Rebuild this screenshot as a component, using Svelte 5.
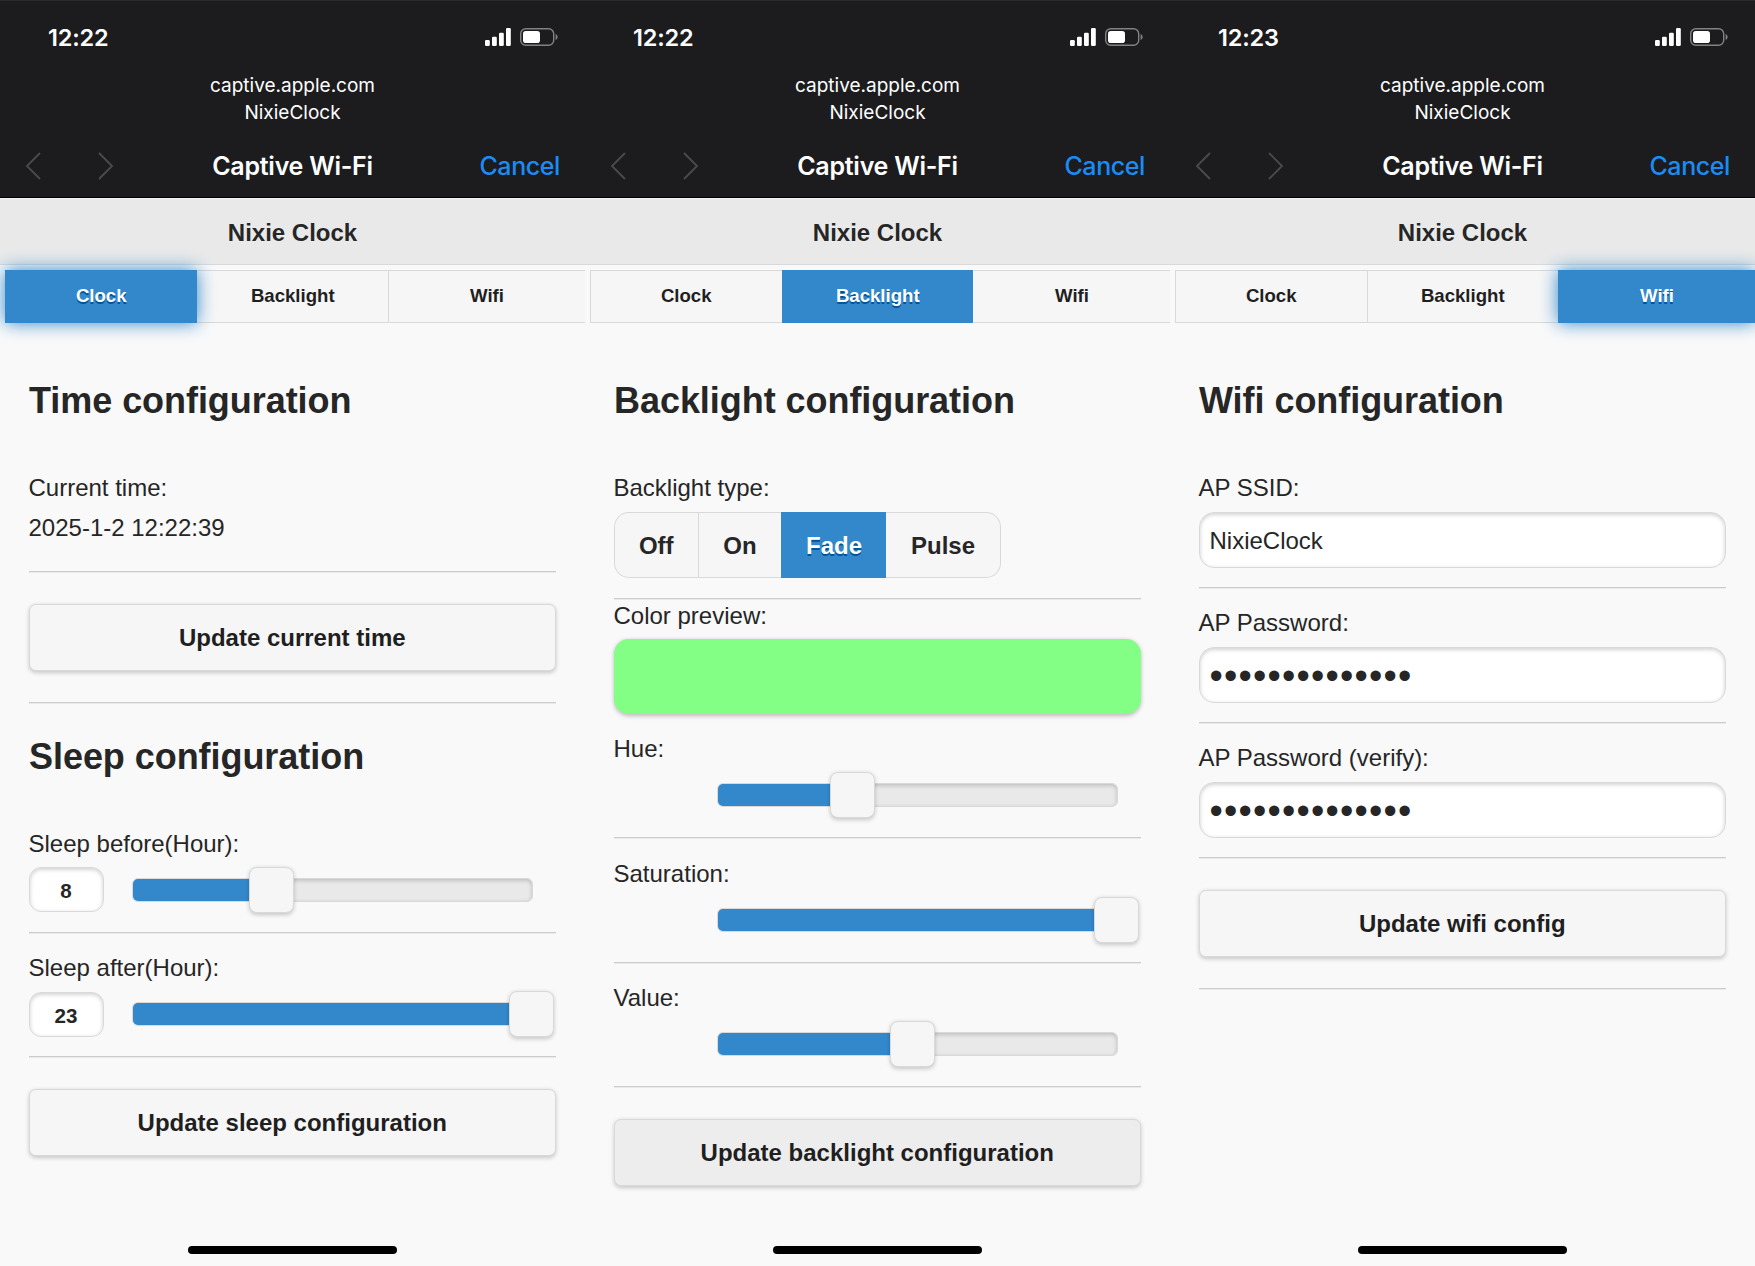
<script>
  const tabs = ['Clock', 'Backlight', 'Wifi'];
  const modes = ['Off', 'On', 'Fade', 'Pulse'];
  const mask = '•'.repeat(14);
</script>

{#snippet chrome(time, active, focused)}
  <header class="browser">
    <div class="status">
      <span class="time">{time}</span>
      <svg class="signal" viewBox="0 0 26 18" width="26" height="18">
        <rect x="0" y="12" width="4.8" height="6" rx="1.3" />
        <rect x="7" y="8.8" width="4.8" height="9.2" rx="1.3" />
        <rect x="14" y="4.8" width="4.8" height="13.2" rx="1.3" />
        <rect x="21" y="0" width="4.8" height="18" rx="1.3" />
      </svg>
      <svg class="battery" viewBox="0 0 38 18" width="38" height="18">
        <rect class="shell" x="0.7" y="0.7" width="33" height="16.6" rx="5" />
        <path class="nub" d="M35.6 6v6c1.2-.5 2-1.7 2-3s-.8-2.500-2-3z" />
        <rect x="3" y="3" width="17" height="12" rx="2.800" />
      </svg>
    </div>
    <div class="origin">
      <span class="host">captive.apple.com</span>
      <span class="network">NixieClock</span>
    </div>
    <div class="toolbar">
      <div class="arrows">
        <svg viewBox="0 0 16 28" width="16" height="28"><path d="M15 1 2 14l13 13" /></svg>
        <svg viewBox="0 0 16 28" width="16" height="28"><path d="m1 1 13 13L1 27" /></svg>
      </div>
      <span class="title">Captive Wi-Fi</span>
      <span class="cancel">Cancel</span>
    </div>
  </header>
  <h1>Nixie Clock</h1>
  <nav>
    {#each tabs as tab}
      <span class="tab" class:active={tab === active} class:focused={tab === active && focused}>{tab}</span>
    {/each}
  </nav>
{/snippet}

{#snippet slider(label, percent, value)}
  <div class="field">
    <div class="label">{label}</div>
    <div class="slider">
      {#if value}
        <span class="number">{value}</span>
      {:else}
        <span></span>
      {/if}
      <div class="track">
        <div class="fill" style:width="{percent}%"></div>
        <div class="handle" style:left="{percent}%"></div>
      </div>
    </div>
  </div>
  <hr />
{/snippet}

{#snippet textField(label, value, masked)}
  <div class="entry">
    <div class="label">{label}</div>
    <div class="input" class:masked>{value}</div>
  </div>
  <hr />
{/snippet}

<main>
  <section class="phone">
    {@render chrome('12:22', 'Clock', true)}
    <div class="content">
      <h2>Time configuration</h2>
      <div class="label first">Current time:</div>
      <div class="label value">2025-1-2 12:22:39</div>
      <hr class="after-value" />
      <button>Update current time</button>
      <hr class="after-button" />
      <h2 class="second">Sleep configuration</h2>
      <div class="sliders sleep">
        {@render slider('Sleep before(Hour):', 34.78, '8')}
        {@render slider('Sleep after(Hour):', 100, '23')}
      </div>
      <button>Update sleep configuration</button>
    </div>
    <div class="home"></div>
  </section>

  <section class="phone">
    {@render chrome('12:22', 'Backlight', false)}
    <div class="content">
      <h2>Backlight configuration</h2>
      <div class="label first">Backlight type:</div>
      <div class="segments">
        {#each modes as mode}
          <span class="segment" class:active={mode === 'Fade'}>{mode}</span>
        {/each}
      </div>
      <hr class="after-segments" />
      <div class="label preview-label">Color preview:</div>
      <div class="preview"></div>
      <div class="sliders">
        {@render slider('Hue:', 33.9, '')}
        {@render slider('Saturation:', 100, '')}
        {@render slider('Value:', 48.8, '')}
      </div>
      <button class="pressed">Update backlight configuration</button>
    </div>
    <div class="home"></div>
  </section>

  <section class="phone">
    {@render chrome('12:23', 'Wifi', true)}
    <div class="content">
      <h2>Wifi configuration</h2>
      <div class="entries">
        {@render textField('AP SSID:', 'NixieClock', false)}
        {@render textField('AP Password:', mask, true)}
        {@render textField('AP Password (verify):', mask, true)}
      </div>
      <button>Update wifi config</button>
      <hr class="after-button" />
    </div>
    <div class="home"></div>
  </section>
</main>

<style>
  :global(body) {
    margin: 0;
    background: #f9f9f9;
  }
  main {
    display: grid;
    grid-template-columns: repeat(3, 585px);
    width: 1755px;
    height: 1266px;
    overflow: hidden;
    font-family: 'Liberation Sans', Arial, sans-serif;
    color: #262626;
    background: #f9f9f9;
  }
  .phone {
    display: flex;
    flex-direction: column;
    height: 1266px;
    overflow: hidden;
    box-sizing: border-box;
  }

  .browser {
    flex: none;
    height: 198px;
    box-sizing: border-box;
    background: #1c1c1e;
    border-top: 1px solid #2a2a2c;
    border-bottom: 1px solid #000;
    font-family: Inter, sans-serif;
    color: #fff;
  }
  .status {
    display: flex;
    align-items: center;
    height: 71px;
    padding: 0 27px 0 48px;
  }
  .time {
    flex: 1;
    padding-top: 2px;
    font-size: 23.5px;
    font-weight: 600;
    letter-spacing: -0.2px;
    line-height: 72px;
  }
  .status svg {
    fill: #fff;
    margin-top: 1px;
  }
  .signal {
    margin-right: 9px;
  }
  .battery .shell {
    fill: none;
    stroke: #828284;
    stroke-width: 1.4;
  }
  .battery .nub {
    fill: #828284;
  }
  .origin {
    display: flex;
    flex-direction: column;
    align-items: center;
    font-size: 19px;
    line-height: 27px;
    height: 54px;
  }
  .toolbar {
    display: grid;
    grid-template-columns: 1fr auto 1fr;
    align-items: center;
    margin-top: 8px;
    height: 63px;
    padding: 0 25px;
    font-size: 25px;
    letter-spacing: -0.25px;
  }
  .arrows {
    display: flex;
    gap: 57px;
  }
  .arrows path {
    fill: none;
    stroke: #4a4a4d;
    stroke-width: 1.9;
  }
  .title {
    font-weight: 600;
  }
  .cancel {
    justify-self: end;
    font-weight: 500;
    letter-spacing: -0.4px;
    color: #1a8cf5;
  }

  h1 {
    flex: none;
    margin: 0;
    height: 67px;
    box-sizing: border-box;
    border-top: 1px solid #f2f2f2;
    border-bottom: 1px solid #d9d9d9;
    background: #e9e9e9;
    text-align: center;
    font-size: 24px;
    line-height: 68px;
    text-shadow: 0 1px 0 #eee;
  }
  nav {
    flex: none;
    display: grid;
    grid-template-columns: 191.5px 191.5px 197px;
    margin: 5px 0 0 5px;
    height: 53px;
  }
  .tab {
    box-sizing: border-box;
    border: 1px solid #d9d9d9;
    border-right: 0;
    background: #f6f6f6;
    text-align: center;
    font-size: 18.6px;
    font-weight: bold;
    line-height: 50px;
    color: #1f1f1f;
  }
  .active,
  .active + .tab {
    border-left-color: transparent;
  }
  .tab.active {
    background: #38c;
    border-color: #38c;
    color: #fff;
    text-shadow: 0 1.5px 0 #059;
  }
  .tab.focused {
    z-index: 1;
    box-shadow: 0 0 18px #38c;
  }

  .content {
    flex: 1;
    padding: 0 29px 0 28.5px;
  }
  h2 {
    margin: 56px 0 0 0.5px;
    font-size: 36px;
    line-height: 44px;
    letter-spacing: -0.05px;
  }
  h2.second {
    margin-top: 32px;
  }
  .label {
    display: block;
    font-size: 24px;
    line-height: 30px;
    height: 30px;
  }
  .label.first {
    margin-top: 50px;
  }
  .label.value {
    margin-top: 10px;
  }
  hr {
    margin: 19px 0 0;
    border: 0;
    height: 1px;
    background: #ccc;
    box-shadow: 0 1px 0 #eaeaea;
  }
  hr.after-value {
    margin-top: 28px;
  }
  hr.after-button {
    margin-top: 31px;
  }
  hr.after-segments {
    margin-top: 20px;
  }
  button {
    display: block;
    width: 100%;
    height: 67px;
    margin: 31.5px 0 0;
    padding: 1px 0 0;
    border: 1px solid #d9d9d9;
    border-radius: 7px;
    background: #f6f6f6;
    box-shadow: 0 1.5px 4.5px rgba(0, 0, 0, 0.2);
    font: bold 24px 'Liberation Sans', Arial, sans-serif;
    color: #1f1f1f;
  }
  button.pressed {
    background: #ededed;
  }

  .sliders {
    margin-top: 20px;
  }
  .sliders.sleep {
    margin-top: 50px;
  }
  .field {
    padding-top: 20.5px;
  }
  .field:first-child {
    padding-top: 0;
  }
  .slider {
    display: grid;
    grid-template-columns: 75px 401px;
    column-gap: 28px;
    align-items: center;
    height: 46px;
    margin-top: 8px;
  }
  .number {
    height: 45px;
    box-sizing: border-box;
    border: 1px solid #d9d9d9;
    border-radius: 12px;
    background: #fff;
    box-shadow: inset 0 1.5px 4.5px rgba(0, 0, 0, 0.2);
    text-align: center;
    font-size: 20.6px;
    font-weight: bold;
    line-height: 45px;
  }
  .track {
    position: relative;
    height: 24px;
    box-sizing: border-box;
    border: 1px solid #d9d9d9;
    border-radius: 6px;
    background: #e9e9e9;
    box-shadow: inset 0 1.5px 4.5px rgba(0, 0, 0, 0.2);
  }
  .fill {
    height: 22px;
    border-radius: 5px 0 0 5px;
    background: #38c;
  }
  .handle {
    position: absolute;
    top: -12px;
    width: 45px;
    height: 46px;
    margin-left: -22.5px;
    box-sizing: border-box;
    border: 1px solid #d9d9d9;
    border-radius: 8px;
    background: #f6f6f6;
    box-shadow: 0 1.5px 4.5px rgba(0, 0, 0, 0.2);
  }

  .segments {
    display: grid;
    grid-template-columns: 84.5px 83px 105px 115px;
    grid-template-rows: 66px;
    width: 387.5px;
    height: 66px;
    margin-top: 9px;
  }
  .segment {
    box-sizing: border-box;
    border: 1px solid #d9d9d9;
    border-right: 0;
    background: #f6f6f6;
    text-align: center;
    font-size: 24px;
    font-weight: bold;
    line-height: 66px;
  }
  .segment:first-child {
    border-radius: 15px 0 0 15px;
  }
  .segment:last-child {
    border-right: 1px solid #d9d9d9;
    border-left: 0;
    border-radius: 0 15px 15px 0;
  }
  .segment.active {
    background: #38c;
    border-color: #38c;
    color: #fff;
    text-shadow: 0 1.5px 0 #059;
  }
  .preview-label {
    margin-top: 1.5px;
  }
  .preview {
    height: 75px;
    margin-top: 8.5px;
    border-radius: 15px;
    background: #82ff84;
    box-shadow: 0 1.5px 4.5px rgba(0, 0, 0, 0.25);
  }

  .entries {
    margin-top: 50px;
  }
  .entry {
    padding-top: 20.2px;
  }
  .entry:first-child {
    padding-top: 0;
  }
  .entry + hr {
    margin-top: 19.5px;
  }
  .input {
    height: 56px;
    margin-top: 8.5px;
    padding: 0 10px;
    box-sizing: border-box;
    border: 1px solid #d9d9d9;
    border-radius: 15px;
    background: #fff;
    box-shadow: inset 0 1.5px 4.5px rgba(0, 0, 0, 0.2);
    font-size: 24px;
    line-height: 55px;
  }
  .input.masked {
    font-size: 38px;
    line-height: 57px;
    letter-spacing: 1.2px;
    overflow: hidden;
  }

  .home {
    flex: none;
    align-self: center;
    width: 209px;
    height: 8px;
    margin-bottom: 12px;
    border-radius: 4px;
    background: #000;
  }
</style>
